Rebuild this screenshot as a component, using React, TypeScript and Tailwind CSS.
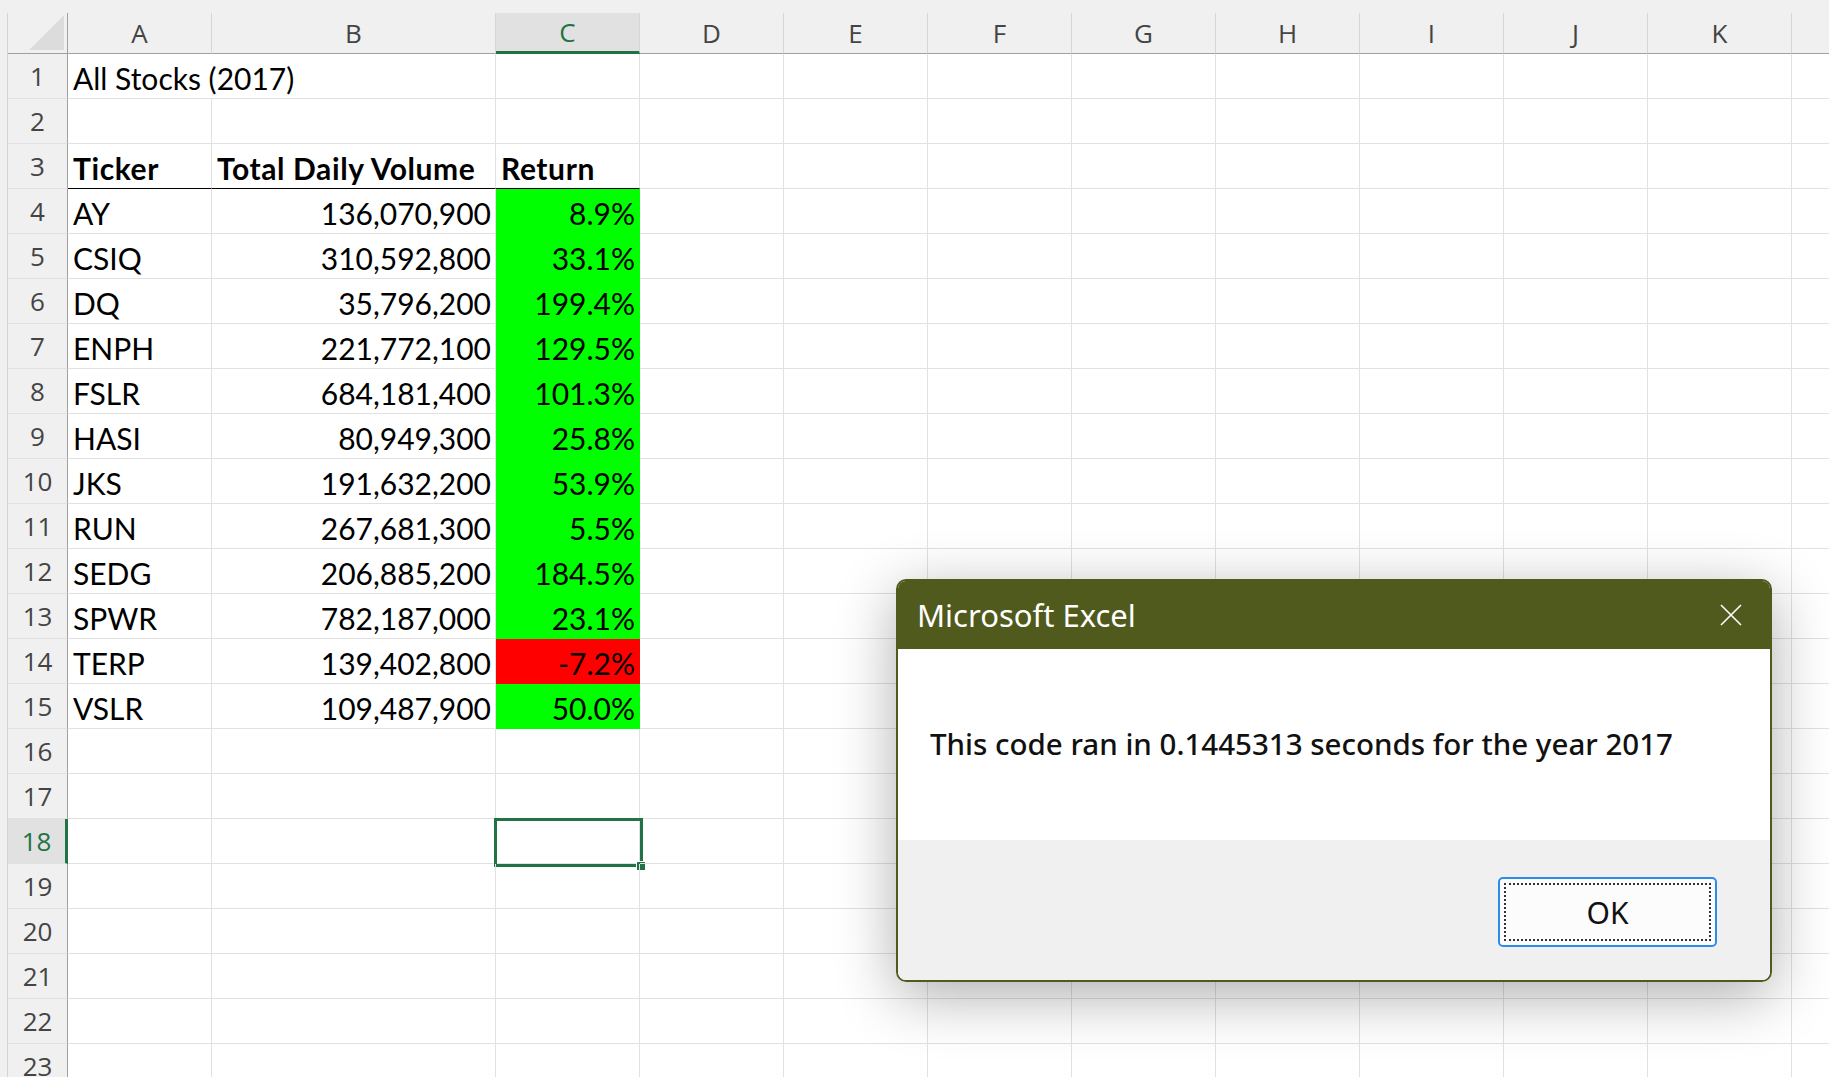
import React from "react"

const colLetters = ["A", "B", "C", "D", "E", "F", "G", "H", "I", "J", "K", "L"]
const colWidths = [
    "w-[144px]",
    "w-[284px]",
    "w-[144px]",
    "w-[144px]",
    "w-[144px]",
    "w-[144px]",
    "w-[144px]",
    "w-[144px]",
    "w-[144px]",
    "w-[144px]",
    "w-[144px]",
    "w-[144px]",
]

const stocks: [string, string, string][] = [
    ["AY", "136,070,900", "8.9%"],
    ["CSIQ", "310,592,800", "33.1%"],
    ["DQ", "35,796,200", "199.4%"],
    ["ENPH", "221,772,100", "129.5%"],
    ["FSLR", "684,181,400", "101.3%"],
    ["HASI", "80,949,300", "25.8%"],
    ["JKS", "191,632,200", "53.9%"],
    ["RUN", "267,681,300", "5.5%"],
    ["SEDG", "206,885,200", "184.5%"],
    ["SPWR", "782,187,000", "23.1%"],
    ["TERP", "139,402,800", "-7.2%"],
    ["VSLR", "109,487,900", "50.0%"],
]

const headFont = { fontFamily: '"Open Sans", "Noto Sans", sans-serif' }
const cellFont = { fontFamily: 'Lato, "Open Sans", sans-serif' }
const dlgFont = { fontFamily: '"Noto Sans", "Open Sans", sans-serif' }

function ColumnHeaders() {
    return (
        <div className="flex h-[41px]" style={headFont}>
            {/* corner */}
            <div className="w-[60px] shrink-0 h-full border-r border-b border-[#a0a0a0] flex items-end justify-end pr-[3px] pb-[3px]">
                <svg width="35" height="35" viewBox="0 0 35 35">
                    <polygon points="35,0 35,35 0,35" fill="#dcdcdc" />
                </svg>
            </div>
            {colLetters.map((c, i) => {
                const selected = c === "C"
                return (
                    <div
                        key={c}
                        className={
                            colWidths[i] +
                            " shrink-0 h-full flex items-center justify-center text-[26px] border-r border-r-[#d6d6d6] " +
                            (selected
                                ? "bg-[#e1e1e1] text-[#217346] border-b-[3px] border-b-[#217346]"
                                : "text-[#444] border-b border-b-[#a0a0a0]")
                        }
                    >
                        {c === "L" ? "" : c}
                    </div>
                )
            })}
        </div>
    )
}

function cellContent(row: number, col: number) {
    if (row === 1 && col === 0) return { text: "All Stocks (2017)" }
    if (row === 3) {
        const h = ["Ticker", "Total Daily Volume", "Return"][col]
        if (h) return { text: h, bold: true }
    }
    if (row >= 4 && row <= 15 && col <= 2) {
        const s = stocks[row - 4]
        if (col === 0) return { text: s[0] }
        if (col === 1) return { text: s[1], right: true }
        return { text: s[2], right: true, fill: s[2].startsWith("-") ? "red" : "green" }
    }
    return null
}

function SheetRow({ row }: { row: number }) {
    const selectedRow = row === 18
    return (
        <div className="flex h-[45px]">
            <div
                className={
                    "w-[60px] shrink-0 h-full flex items-center justify-center text-[26px] border-b border-b-[#e1e1e1] " +
                    (selectedRow
                        ? "bg-[#e1e1e1] text-[#217346] border-r-[3px] border-r-[#217346]"
                        : "bg-[#f0f0f0] text-[#444] border-r border-r-[#a0a0a0]")
                }
                style={headFont}
            >
                {row}
            </div>
            {colLetters.map((c, i) => {
                const content = cellContent(row, i)
                let cls = colWidths[i] + " shrink-0 h-full relative flex items-end pb-[5px] whitespace-nowrap text-[30px] leading-none text-black "
                if (content?.fill === "green") cls += "bg-[#00ff00] border-r border-b border-[#00ff00] "
                else if (content?.fill === "red") cls += "bg-[#ff0000] border-r border-b border-[#ff0000] "
                else if (row === 3 && i <= 2) cls += "border-r border-r-[#e1e1e1] border-b border-b-black "
                else if (row === 1 && i === 0) cls += "border-b border-b-[#e1e1e1] "
                else cls += "border-r border-b border-[#e1e1e1] "
                cls += content?.right ? "justify-end pr-[4px] " : "pl-[5px] "
                if (content?.bold) cls += "font-bold tracking-[0.6px] "
                return (
                    <div key={c} className={cls} style={cellFont}>
                        {content?.text}
                        {row === 18 && c === "C" && (
                            <div className="absolute -left-[2px] -top-[1px] w-[149px] h-[49px] border-[3px] border-[#217346]">
                                <div className="absolute left-[139px] top-[40px] w-[10px] h-[10px] bg-[#217346] border border-white" />
                            </div>
                        )}
                    </div>
                )
            })}
        </div>
    )
}

function MessageBox() {
    return (
        <div className="absolute left-[896px] top-[579px] w-[876px] h-[403px] rounded-[10px] border-2 border-[#4f5a1c] overflow-hidden flex flex-col shadow-[0_14px_60px_rgba(0,0,0,0.32)]" style={dlgFont}>
            <div className="h-[68px] shrink-0 bg-[#4f5a1c] flex items-center justify-between pl-[19px] pr-[28px]">
                <span className="text-white text-[31px] leading-none">Microsoft Excel</span>
                <svg width="22" height="22" viewBox="0 0 22 22">
                    <path d="M1 1 L21 21 M21 1 L1 21" stroke="white" strokeWidth="1.6" />
                </svg>
            </div>
            <div className="h-[191px] shrink-0 bg-white flex items-center pl-[32px]">
                <span className="text-[29.5px] text-[#111] font-medium whitespace-nowrap">
                    This code ran in 0.1445313 seconds for the year 2017
                </span>
            </div>
            <div className="flex-1 bg-[#f0f0f0] flex justify-end items-start pt-[37px] pr-[53px]">
                <button className="relative w-[219px] h-[70px] rounded-[5px] border-2 border-[#2f8ce4] bg-[#fcfcfc] flex items-center justify-center text-[30px] text-[#111]">
                    <span className="absolute inset-[4px] border-2 border-dotted border-[#333]" />
                    OK
                </button>
            </div>
        </div>
    )
}

export default function App() {
    const rows = Array.from({ length: 23 }, (_, i) => i + 1)
    return (
        <div className="relative w-[1829px] h-[1077px] overflow-hidden bg-[#f0f0f0]">
            <div className="pt-[13px]">
                <div className="ml-[7px] border-l border-[#d4d4d4] bg-white">
                    <div className="bg-[#f0f0f0]">
                        <ColumnHeaders />
                    </div>
                    {rows.map((r) => (
                        <SheetRow key={r} row={r} />
                    ))}
                </div>
            </div>
            <MessageBox />
        </div>
    )
}
